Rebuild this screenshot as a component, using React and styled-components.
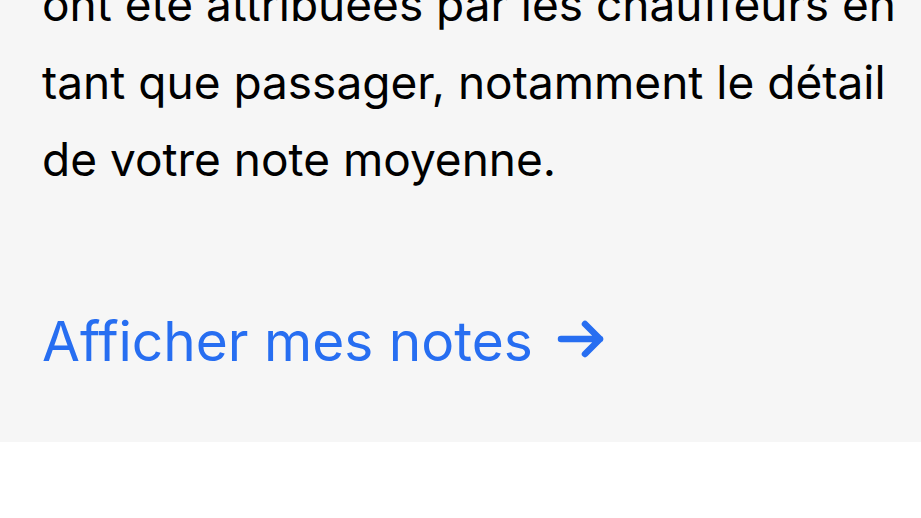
import React from "react";
import styled, { createGlobalStyle } from "styled-components";

const Global = createGlobalStyle`
  html, body { margin: 0; padding: 0; background: #ffffff; }
  body { font-family: "Inter", "Liberation Sans", sans-serif; -webkit-font-smoothing: antialiased; }
`;

const Page = styled.div`
  width: 921px;
  height: 518px;
  overflow: hidden;
  background: #ffffff;
`;

const Panel = styled.section`
  background: #f6f6f6;
  padding: 0 0 0 42px;
  height: 442px;
  box-sizing: border-box;
  overflow: hidden;
`;

const Body = styled.p`
  margin: -34px 0 0;
  font-size: 46px;
  line-height: 77.5px;
  color: #000000;
  letter-spacing: 0;
  white-space: nowrap;
`;

const Link = styled.a`
  display: inline-flex;
  align-items: center;
  gap: 24px;
  margin-top: 110px;
  font-size: 55px;
  line-height: 64px;
  color: #276ef1;
  text-decoration: none;
  letter-spacing: 0;
`;

const ArrowIcon = styled.svg`
  flex: none;
  margin-top: -4px;
`;

const Arrow = () => (
  <ArrowIcon width="48" height="40" viewBox="0 0 48 40" fill="none">
    <path
      d="M4 20 H43 M28 5 L43 20 L28 35"
      stroke="#276ef1"
      strokeWidth="6.5"
      strokeLinecap="round"
      strokeLinejoin="round"
    />
  </ArrowIcon>
);

export default function App() {
  return (
    <Page>
      <Global />
      <Panel>
        <Body>
          ont été attribuées par les chauffeurs en
          <br />
          tant que passager, notamment le détail
          <br />
          de votre note moyenne.
        </Body>
        <Link href="#">
          Afficher mes notes
          <Arrow />
        </Link>
      </Panel>
    </Page>
  );
}
